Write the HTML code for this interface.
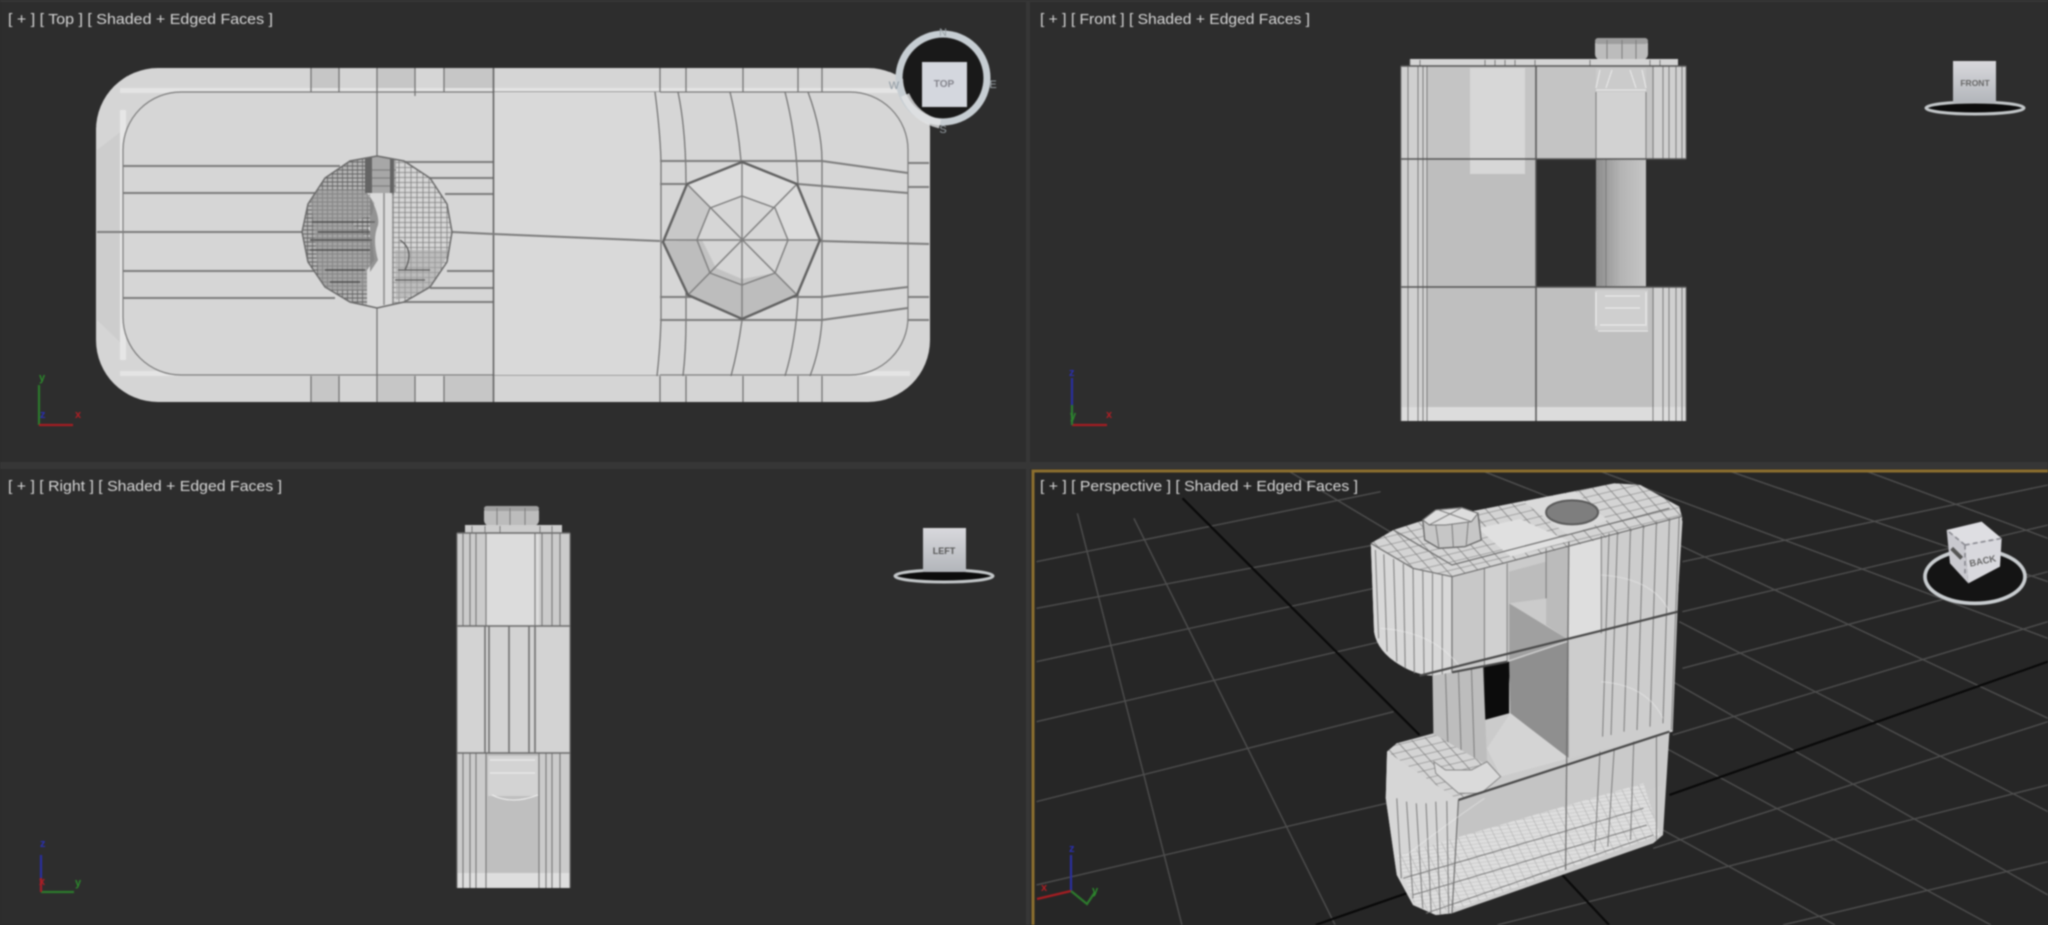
<!DOCTYPE html>
<html><head><meta charset="utf-8"><title>Viewports</title>
<style>
html,body{margin:0;padding:0;background:#2d2d2d;width:2048px;height:925px;overflow:hidden}
svg{position:absolute;left:0;top:0;filter:blur(.85px)}
.v *{vector-effect:non-scaling-stroke}
text{font-family:"Liberation Sans",sans-serif}
.lbl{font-size:15px;fill:#d6d6d6}
.e{stroke:#6e6e6e;stroke-width:1.2;fill:none}
.f{stroke:#7c7c7c;stroke-width:1;fill:none}
.d{stroke:#6a6a6a;stroke-width:2;fill:none}
.g{stroke:#4e4e4e;stroke-width:1.4;fill:none}
.k{stroke:#090909;stroke-width:2.2;fill:none}
</style></head><body>
<svg width="2048" height="925" viewBox="0 0 2048 925" xmlns="http://www.w3.org/2000/svg">
<defs>
<pattern id="h1" width="5" height="4" patternUnits="userSpaceOnUse"><rect width="5" height="4" fill="#b4b4b4"/><path d="M0 2H5M2.500 0V4" stroke="#666" stroke-width=".9"/></pattern>
<pattern id="h2" width="6" height="5" patternUnits="userSpaceOnUse"><rect width="6" height="5" fill="#d6d6d6"/><path d="M0 2.500H6M3 0V5" stroke="#808080" stroke-width=".8"/></pattern>
<pattern id="h3" width="14" height="11" patternUnits="userSpaceOnUse" patternTransform="rotate(-14)"><rect width="14" height="11" fill="#dedede"/><path d="M0 5H14M5 0V11" stroke="#b0b0b0" stroke-width="1"/></pattern>
<pattern id="h4" width="22" height="22" patternUnits="userSpaceOnUse" patternTransform="rotate(-25)"><rect width="22" height="22" fill="#d4d4d4"/><path d="M0 10H22M8 0V22" stroke="#7e7e7e" stroke-width="1.400"/></pattern>
<linearGradient id="rod" x1="0" x2="1" y1="0" y2="0"><stop offset="0" stop-color="#8c8c8c"/><stop offset=".5" stop-color="#b4b4b4"/><stop offset="1" stop-color="#c6c6c6"/></linearGradient>
<linearGradient id="cb" x1="0" x2="0" y1="0" y2="1"><stop offset="0" stop-color="#d8d8dc"/><stop offset="1" stop-color="#b2b5ba"/></linearGradient>
<clipPath id="sph"><polygon points="377,156 404,161 430,178 447,204 452,232 447,262 430,287 404,302 377,308 350,302 325,287 308,262 302,232 308,204 325,178 350,161"/></clipPath>
<clipPath id="pv"><rect x="1033" y="471" width="1015" height="454"/></clipPath>
</defs>

<!-- frames -->
<rect width="2048" height="925" fill="#2d2d2d"/>
<rect x="0" y="0" width="2048" height="2" fill="#363636"/>
<rect x="0" y="462" width="2048" height="7" fill="#363636"/>
<rect x="1026" y="0" width="4" height="925" fill="#363636"/>

<!-- perspective viewport -->
<rect x="1031" y="469" width="1017" height="456" fill="#262626"/>
<g clip-path="url(#pv)">
<g class="v" transform="translate(1030,465) scale(.6492,.3333)">
  <g class="g">
    <path d="M10 290L540 80M10 430L530 240M10 590L530 370M10 770L540 530M10 1010L560 740M10 1260L560 1010"/>
    <path d="M1005 290L1568 60M1005 440L1568 180M1005 610L1568 320M990 810L1568 470M960 1150L1568 770M720 1380L1568 960M1160 1380L1568 1190"/>
    <path d="M73 145L234 1380M160 160L470 1380M400 20L580 230"/>
    <path d="M1000 240L1568 760M1000 470L1568 1040M990 650L1568 1290M980 850L1480 1380M970 1090L1240 1380M700 20L1000 250M880 20L1568 520M1080 20L1568 350M1290 20L1568 220"/>
  </g>
  <path class="k" d="M235 100L600 810M820 1230L892 1380M440 1380L580 1285M985 990L1568 590"/>

  <!-- body silhouette -->
  <path fill="#cbcbcb" d="M525 235L560 195L600 170L900 55L940 60L1000 125L1005 170L985 800L975 1110L960 1135L650 1345L625 1350L590 1320L565 1230L548 1000L550 860L565 835L735 745L740 590L620 632Q595 630 570 600Q535 560 530 500Z"/>
  <polygon fill="#0c0c0c" points="700,605 738,590 738,745 700,765"/>
  <polygon fill="#bdbdbd" points="620,630 698,605 704,890 680,915 640,915 622,890"/>
  <path class="f" d="M640 625L645 915M660 620L665 915M680 612L685 910"/>
  <polygon fill="#8f8f8f" points="738,590 830,530 830,880 740,745"/>
  <polygon fill="#a0a0a0" points="738,415 830,525 738,585"/>
  <polygon fill="#bcbcbc" points="738,320 795,290 795,400 738,415"/>
  <polygon fill="#d0d0d0" points="700,310 735,295 735,592 700,605"/>
  <polygon fill="#c8c8c8" points="650,335 700,310 700,605 650,622"/>
  <polygon fill="#bbbbbb" points="795,250 830,232 830,525 795,480"/>
  <polygon fill="#dedede" points="830,232 880,210 880,500 830,525"/>
  <polygon fill="#cdcdcd" points="880,210 1003,155 990,800 830,880 830,530 880,505"/>
  <polygon fill="#c4c4c4" points="660,1005 825,900 825,1100 660,1190"/>
  <polygon fill="#cacaca" points="825,885 985,800 975,960 825,1050"/>
  <path fill="#d8d8d8" d="M525 235L590 310L650 335L650 622L620 632Q595 630 570 600Q535 560 530 500Z"/>
  <polygon fill="#d6d6d6" points="550,860 660,1005 650,1345 625,1350 590,1320 565,1230 548,1000"/>
  <polygon fill="url(#h3)" points="565,1170 945,955 970,1110 660,1330 620,1345 590,1310"/>
  <!-- top faces -->
  <polygon fill="url(#h4)" points="525,235 560,195 600,170 900,55 940,60 1000,125 1005,160 650,335 590,310"/>
  <polygon fill="#e0e0e0" points="690,190 755,162 830,228 740,275"/>
  <polygon fill="#dadada" points="760,110 840,80 890,165 830,212"/>
  <ellipse cx="835" cy="142" rx="40" ry="36" fill="#7e7e7e" stroke="#5a5a5a" stroke-width="2"/>
  <polygon fill="url(#h4)" points="550,860 565,835 625,810 725,925 660,1005"/>
  <polygon fill="#d4d4d4" points="704,850 740,745 830,880 725,935"/>
  <!-- bolt -->
  <polygon fill="#c6c6c6" stroke="#666" stroke-width="1.300" points="605,165 625,135 665,128 690,145 695,225 670,245 630,250 608,225"/>
  <polygon fill="#dddddd" stroke="#777" stroke-width="1.100" points="605,165 625,135 665,128 690,145 680,170 640,180 615,180"/>
  <path class="f" d="M625 180L630 250M650 178L652 245M675 170L672 240M630 135L680 170M665 128L615 180"/>
  <!-- rod foot -->
  <polygon fill="#dadada" stroke="#888" stroke-width="1" points="622,890 640,915 680,915 704,890 725,935 695,985 660,985 625,925"/>
  <!-- mesh lines -->
  <g class="f">
    <path d="M795 250V400M880 212V505M892 205L882 815M905 200L895 810M925 190L915 800M945 180L935 795M965 170L955 785M985 160L975 775M1000 155L988 795"/>
    <path d="M532 255L537 520M545 268L550 560M560 282L565 590M575 296L578 610M590 310L592 625M605 318L607 632M620 325L620 632M635 330V628M700 310V605M735 295V592"/>
    <path d="M565 1000L572 1240M580 1010L590 1300M595 1015L605 1330M610 1015L618 1345M625 1010L632 1350M642 1008L645 1345"/>
    <path d="M870 1160L878 860M890 1145L900 850M925 1125L930 830M965 1125L965 810"/>
    <path d="M610 1345L960 1110M590 1290L950 1080M575 1240L945 1030"/>
  </g>
  <path class="e" d="M830 230L825 1215M650 335V622M660 1005L650 1345M525 235L590 310L650 335L1003 155M560 195L650 300L985 130"/>
  <path stroke="#4a4a4a" stroke-width="2.200" fill="none" d="M600 632L998 440M660 1005L985 800M650 622L735 590"/>
  <path stroke="#f2f2f2" stroke-width="1.100" fill="none" opacity=".45" d="M880 330Q960 340 985 440M880 650Q950 660 975 760M540 490Q620 500 660 600M580 1170Q640 1080 700 1000"/>
</g>
</g>
<path fill="none" stroke="#8c6f2e" stroke-width="3" d="M1033 925V471H2048"/>

<!-- TOP VIEW BODY -->
<rect x="96" y="68" width="834" height="334" rx="62" ry="62" fill="#d5d5d5"/>
<path d="M97 150V320L123 345V130Z" fill="#cdcdcd"/>
<rect x="311" y="68" width="182" height="24" fill="#c6c6c6"/>
<rect x="311" y="376" width="182" height="26" fill="#c6c6c6"/>
<rect x="339" y="68" width="38" height="24" fill="#d4d4d4"/><rect x="339" y="376" width="38" height="26" fill="#d4d4d4"/>
<rect x="415" y="68" width="29" height="24" fill="#d6d6d6"/><rect x="415" y="376" width="29" height="26" fill="#d6d6d6"/>
<rect x="120" y="88" width="790" height="5" fill="#e6e6e6" opacity=".85"/>
<rect x="120" y="371" width="790" height="5" fill="#e6e6e6" opacity=".85"/>
<rect x="120" y="110" width="6" height="250" fill="#e6e6e6"/>
<rect x="123" y="92" width="785" height="283" rx="58" ry="58" fill="#d6d6d6" stroke="#7a7a7a" stroke-width="1.200"/>
<rect x="493" y="92" width="167" height="283" fill="#d9d9d9"/>
<g class="e">
 <path d="M311 68V92M339 68V92M377 68V92M415 68V96M444 68V92M311 376V402M339 376V402M377 376V402M415 376V402M444 376V402M660 68V92M686 68V92M743 68V92M798 68V92M822 68V92M660 376V402M686 376V402M743 376V402M798 376V402M822 376V402"/>
 <path d="M377 92V156M377 308V376"/>
 <path d="M655 92Q660 130 661 161V320Q660 350 657 376M678 92Q686 130 686 184V320Q686 350 683 376M730 92Q738 125 741 161M742 320Q738 350 731 376M785 92Q796 135 798 184V297Q796 340 785 376M808 92Q822 130 822 161V320Q820 350 810 376"/>
</g>
<path stroke="#5e5e5e" stroke-width="1.500" fill="none" d="M493.500 68V402"/>
<g class="d" style="stroke:#7d7d7d">
 <path d="M123 166H340M123 193H316M123 271H315M123 298H335M97 232H302"/>
 <path d="M400 162H493M430 178H493M445 194H493M447 271H493M430 288H493M400 302H493"/>
 <path d="M452 232L493 234L660 241M820 241L929 244"/>
 <path d="M660 161H822L908 173M660 184H798L908 193M908 163H929M908 187H929M660 297H822L908 287M660 320H822L908 308M908 297H929M908 320H929"/>
</g>

<!-- octagon -->
<polygon fill="#dcdcdc" points="742,162 797,184 820,240 797,295 742,319 688,295 663,242 687,184"/>
<polygon fill="#c8c8c8" points="687,184 663,242 697,240 710,208"/>
<polygon fill="#bdbdbd" points="663,242 688,295 742,319 797,295 775,273 742,285 710,273 697,240"/>
<polygon fill="#d0d0d0" points="797,295 820,240 788,240 775,273"/>
<polygon fill="#d6d6d6" points="742,196 775,208 788,240 775,273 742,285 710,273 697,240 710,208"/>
<polygon fill="#c2c2c2" points="710,273 742,285 775,273 742,279 716,268 702,240 697,240"/>
<g stroke="#7e7e7e" stroke-width="1.400" fill="none">
 <polygon points="742,196 775,208 788,240 775,273 742,285 710,273 697,240 710,208"/>
 <path d="M742 162V319M663 240H820M687 184L797 295M797 184L688 295"/>
</g>
<polygon fill="none" stroke="#616161" stroke-width="2.400" points="742,162 797,184 820,240 797,295 742,319 688,295 663,242 687,184"/>

<!-- sphere -->
<g clip-path="url(#sph)">
 <rect x="300" y="150" width="70" height="165" fill="url(#h1)"/>
 <rect x="390" y="150" width="70" height="165" fill="url(#h2)"/>
 <path d="M310 190H368L375 200L372 215L350 222L372 242L375 265L368 290H320Z" fill="#9a9a9a" opacity=".6"/>
 <path d="M312 222H375M318 232H370M310 240H372M310 250H370M325 270H365M330 282H360" stroke="#4e4e4e" stroke-width="1.500" fill="none"/>
 <path d="M395 250H450L430 290L396 300Z" fill="#a8a8a8" opacity=".55"/>
 <path d="M400 240Q415 250 405 270M398 270H430M395 280H425" stroke="#5a5a5a" stroke-width="1.300" fill="none"/>
 <path d="M366 156H396V193H366Z" fill="#a7a7a7"/>
 <path d="M366 170H396M366 178H396M366 186H396" stroke="#7a7a7a" stroke-width="1.100"/>
 <path d="M365 150H372V193H365ZM390 150H394V195H390Z" fill="#646464"/>
 <path d="M367 193H392V305H405L377 312L367 308V270L378 255L375 240L368 228L378 220L376 205Z" fill="#dadada"/>
 <path d="M384 193V305M393 193V305" stroke="#8a8a8a" stroke-width="1.500"/>
 <path d="M369 195Q380 215 378 225Q372 240 378 260L370 272V193Z" fill="#6e6e6e" opacity=".65"/>
</g>
<polygon fill="none" stroke="#6a6a6a" stroke-width="1.500" points="377,156 404,161 430,178 447,204 452,232 447,262 430,287 404,302 377,308 350,302 325,287 308,262 302,232 308,204 325,178 350,161"/>

<!-- FRONT VIEW -->
<rect x="1595" y="38" width="53" height="22" rx="6" fill="#bcbcbc"/>
<rect x="1595" y="38" width="53" height="6" rx="3" fill="#9e9e9e"/>
<path class="f" d="M1607 40V59M1622 40V59M1636 40V59"/>
<rect x="1410" y="59" width="268" height="8" fill="#d4d4d4"/>
<path class="f" d="M1410 60V66M1420 60V66M1485 60V66M1495 60V66M1505 60V66M1515 60V66M1535 60V66M1590 60V66M1650 60V66M1660 60V66"/>
<rect x="1401" y="66" width="285" height="93" fill="#c4c4c4"/>
<rect x="1401" y="159" width="135" height="128" fill="#bebebe"/>
<rect x="1401" y="287" width="285" height="134" fill="#bfbfbf"/>
<rect x="1401" y="66" width="26" height="355" fill="#cfcfcf"/>
<rect x="1654" y="66" width="32" height="93" fill="#d0d0d0"/>
<rect x="1654" y="287" width="32" height="134" fill="#d0d0d0"/>
<rect x="1470" y="68" width="55" height="106" fill="#d7d7d7"/>
<rect x="1596" y="92" width="50" height="67" fill="#d2d2d2"/>
<rect x="1596" y="68" width="50" height="24" fill="#cbcbcb"/>
<path stroke="#ececec" stroke-width="1" fill="none" d="M1596 90H1646M1600 70L1596 88M1612 70L1606 88M1630 70L1636 88M1642 70L1646 88"/>
<rect x="1536" y="159" width="150" height="128" fill="#2d2d2d"/>
<rect x="1596" y="159" width="50" height="128" fill="url(#rod)"/>
<rect x="1595" y="290" width="53" height="40" fill="#cfcfcf"/>
<path stroke="#efefef" stroke-width="1" fill="none" d="M1596 292V326M1646 292V326M1605 296H1640M1605 308H1640M1600 325H1645M1598 331H1648"/>
<rect x="1401" y="407" width="285" height="14" fill="#dcdcdc"/>
<g class="f">
 <path d="M1401 66V421M1408 66V421M1418 66V421M1423 66V421M1427 66V421M1653 66V159M1653 287V421M1663 66V159M1663 287V421M1669 66V159M1669 287V421M1676 66V159M1676 287V421M1682 66V159M1682 287V421M1686 66V159M1686 287V421"/>
 <path d="M1596 92V159M1646 92V159M1606 159V287"/>
</g>
<path stroke="#555" stroke-width="1.500" fill="none" d="M1536 66V421M1401 159H1686M1401 287H1686M1401 66H1686"/>

<!-- RIGHT VIEW -->
<rect x="484" y="506" width="55" height="20" rx="6" fill="#bcbcbc"/>
<rect x="484" y="506" width="55" height="5" rx="3" fill="#a0a0a0"/>
<path class="f" d="M497 508V525M510 508V525M525 508V525"/>
<rect x="465" y="525" width="97" height="9" fill="#cdcdcd"/>
<path class="f" d="M472 526V533M485 526V533M500 526V533M540 526V533M552 526V533"/>
<rect x="457" y="533" width="113" height="355" fill="#cbcbcb"/>
<rect x="486" y="533" width="53" height="93" fill="#dcdcdc"/>
<rect x="457" y="626" width="113" height="127" fill="#d3d3d3"/>
<rect x="486" y="753" width="53" height="135" fill="#bfbfbf"/>
<rect x="488" y="756" width="50" height="40" fill="#d3d3d3"/>
<path stroke="#efefef" stroke-width="1" fill="none" d="M490 760H535M490 773H535M492 795Q512 805 538 795"/>
<rect x="457" y="873" width="113" height="15" fill="#dedede"/>
<g stroke="#777" stroke-width="1.100" fill="none">
 <path d="M457 533V626M463 533V626M470 533V626M476 533V626M486 533V626M535 533V626M542 533V626M552 533V626M560 533V626M570 533V626"/>
 <path d="M457 753V888M463 753V888M470 753V888M476 753V888M486 753V888M539 753V888M546 753V888M552 753V888M560 753V888M570 753V888"/>
 <path d="M457 626V753M570 626V753"/>
</g>
<path stroke="#6c6c6c" stroke-width="1.500" fill="none" d="M485 626V753M489 626V753M509 626V753M529 626V753M535 626V753M457 626H570M457 753H570M457 533H570"/>

<!-- VIEWCUBES -->
<circle cx="943" cy="78" r="40" fill="#191919"/>
<circle cx="943" cy="78" r="44" fill="none" stroke="#c6cdd2" stroke-width="7"/>
<path d="M905 95Q915 118 940 124" fill="none" stroke="#e2e4e5" stroke-width="9" opacity=".8"/>
<rect x="922" y="62" width="45" height="45" fill="#d4d7de"/>
<text x="944" y="87" text-anchor="middle" font-size="10" font-weight="bold" fill="#84848c">TOP</text>
<text x="943" y="36" text-anchor="middle" font-size="11" fill="#98a0a5">N</text>
<text x="894" y="89" text-anchor="middle" font-size="11" fill="#8e99a2">W</text>
<text x="993" y="88" text-anchor="middle" font-size="11" fill="#98a0a5">E</text>
<text x="943" y="133" text-anchor="middle" font-size="11" fill="#98a0a5">S</text>
<ellipse cx="1975" cy="108" rx="46" ry="5" fill="#0c0c0c"/>
<ellipse cx="1975" cy="108" rx="49" ry="6" fill="none" stroke="#c2c6c8" stroke-width="3"/>
<rect x="1953" y="61" width="43" height="42" fill="url(#cb)"/>
<text x="1975" y="86" text-anchor="middle" font-size="8.500" font-weight="bold" fill="#666">FRONT</text>
<ellipse cx="944" cy="576" rx="46" ry="5" fill="#0c0c0c"/>
<ellipse cx="944" cy="576" rx="49" ry="6" fill="none" stroke="#c2c6c8" stroke-width="3"/>
<rect x="923" y="528" width="43" height="44" fill="url(#cb)"/>
<text x="944" y="554" text-anchor="middle" font-size="9" font-weight="bold" fill="#555">LEFT</text>
<g transform="translate(1900,500) scale(.3333)">
 <ellipse cx="225" cy="230" rx="150" ry="80" fill="#141414" stroke="#c8cccf" stroke-width="11"/>
 <polygon fill="#dedee2" points="140,90 245,65 305,115 195,135"/>
 <polygon fill="#c9c9cf" points="140,90 195,135 205,250 150,190"/>
 <polygon fill="#d8d8dd" points="195,135 305,115 300,200 205,250"/>
 <path d="M195 135L305 115M195 135V220M195 135L140 90" stroke="#8b8b92" stroke-width="5" stroke-dasharray="14 10" fill="none"/>
 <text x="250" y="192" text-anchor="middle" font-size="28" font-weight="bold" fill="#666" transform="rotate(-12 250 192)">BACK</text>
 <path d="M155 145L185 175" stroke="#555" stroke-width="12"/>
</g>

<!-- AXES -->
<g fill="none" stroke-width="2.200">
 <path d="M39 425V385" stroke="#2c7a2c"/><path d="M39 425H73" stroke="#a51d22"/>
 <path d="M1072 425V378" stroke="#2a2fa0"/><path d="M1072 425H1107" stroke="#a51d22"/><path d="M1072 425V405" stroke="#2c7a2c"/>
 <path d="M41 892V855" stroke="#2a2fa0"/><path d="M41 892H74" stroke="#2c7a2c"/><path d="M41 892V878" stroke="#a51d22"/>
 <path d="M1071 891V855" stroke="#2a2fa0"/><path d="M1071 891L1037 899" stroke="#a51d22"/><path d="M1071 891L1087 904L1095 892" stroke="#2c7a2c"/>
</g>
<g font-size="11" font-weight="bold">
 <text x="39" y="381" fill="#2c8a2c">y</text><text x="75" y="418" fill="#b01e24">x</text><text x="40" y="418" fill="#2a2fb0">z</text>
 <text x="1069" y="376" fill="#2a2fb0">z</text><text x="1106" y="418" fill="#b01e24">x</text><text x="1070" y="419" fill="#2c8a2c">y</text>
 <text x="40" y="847" fill="#2a2fb0">z</text><text x="75" y="886" fill="#2c8a2c">y</text><text x="39" y="885" fill="#b01e24">x</text>
 <text x="1069" y="852" fill="#2a2fb0">z</text><text x="1041" y="891" fill="#b01e24">x</text><text x="1092" y="894" fill="#2c8a2c">y</text>
</g>

<!-- LABELS -->
<text class="lbl" x="8" y="24" textLength="265" lengthAdjust="spacingAndGlyphs">[ + ] [ Top ] [ Shaded + Edged Faces ]</text>
<text class="lbl" x="1040" y="24" textLength="270" lengthAdjust="spacingAndGlyphs">[ + ] [ Front ] [ Shaded + Edged Faces ]</text>
<text class="lbl" x="8" y="491" textLength="274" lengthAdjust="spacingAndGlyphs">[ + ] [ Right ] [ Shaded + Edged Faces ]</text>
<text class="lbl" x="1040" y="491" textLength="318" lengthAdjust="spacingAndGlyphs">[ + ] [ Perspective ] [ Shaded + Edged Faces ]</text>
</svg>
</body></html>
